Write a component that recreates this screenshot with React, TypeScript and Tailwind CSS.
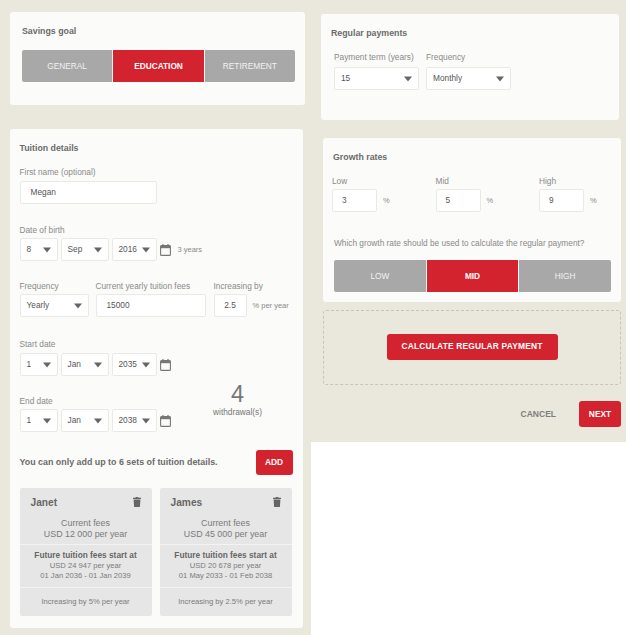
import React from 'react';

const Caret = () => (
  <svg width="8" height="6" viewBox="0 0 8 6" className="shrink-0 text-[#666]">
    <path d="M0 0.5h8L4 5.5z" fill="currentColor" />
  </svg>
);

const CalendarIcon = () => (
  <svg width="11" height="12" viewBox="0 0 11 12" className="shrink-0 text-[#777]">
    <path d="M3 0v2M8 0v2" stroke="currentColor" strokeWidth="1.2" />
    <rect x="0.6" y="1.6" width="9.8" height="9.8" rx="1" fill="none" stroke="currentColor" strokeWidth="1.1" />
    <rect x="0.6" y="1.6" width="9.8" height="2.6" fill="currentColor" />
  </svg>
);

const TrashIcon = () => (
  <svg width="8" height="10" viewBox="0 0 8 10" className="shrink-0 text-[#666]">
    <path d="M2.8 0h2.4l.3.7H8V2H0V.7h2.5zM.6 2.6h6.8L6.9 10H1.1z" fill="currentColor" />
  </svg>
);

const Label = ({ children, className = '' }: { children: React.ReactNode; className?: string }) => (
  <div className={`text-[8.3px] leading-[12px] text-[#8a8a8a] ${className}`}>{children}</div>
);

const Title = ({ children }: { children: React.ReactNode }) => (
  <h2 className="text-[8.8px] font-bold leading-[12px] text-[#6b6b6b]">{children}</h2>
);

const Select = ({ value, className = '' }: { value: string; className?: string }) => (
  <div className={`flex h-[23px] items-center justify-between rounded-[2px] border border-[#e9e9e6] bg-white pl-[6px] pr-[6px] text-[8.3px] text-[#555] ${className}`}>
    <span>{value}</span>
    <Caret />
  </div>
);

const TextInput = ({ value, className = '' }: { value: string; className?: string }) => (
  <div className={`flex h-[23px] items-center rounded-[2px] border border-[#e9e9e6] bg-white text-[8.3px] text-[#555] ${className}`}>
    {value}
  </div>
);

const Segmented = ({ items, active, className = '' }: { items: string[]; active: string; className?: string }) => (
  <div className={`flex gap-px overflow-hidden rounded-[2px] ${className}`}>
    {items.map(item => (
      <div
        key={item}
        className={`flex flex-1 items-center justify-center text-[8.3px] ${item === active ? 'bg-[#d2232f] font-bold text-white' : 'bg-[#a8a8a8] text-[#f2f2f2]'}`}
      >
        {item}
      </div>
    ))}
  </div>
);

const DateRow = ({ d, m, y, note }: { d: string; m: string; y: string; note?: string }) => (
  <div className="flex items-center">
    <Select value={d} className="w-[38px]" />
    <Select value={m} className="ml-[3px] w-[48px]" />
    <Select value={y} className="ml-[3px] w-[45px]" />
    <span className="ml-[3px]"><CalendarIcon /></span>
    {note && <span className="ml-[7px] text-[7.5px] text-[#8a8a8a]">{note}</span>}
  </div>
);

const RedButton = ({ children, className = '' }: { children: React.ReactNode; className?: string }) => (
  <div className={`flex items-center justify-center rounded-[3px] bg-[#d2232f] text-[8.4px] font-bold text-white ${className}`}>
    {children}
  </div>
);

const TuitionCard = ({ name, fee, future, range, rate }: { name: string; fee: string; future: string; range: string; rate: string }) => (
  <div className="w-[132px] rounded-[2px] bg-[#e6e6e6] text-center text-[#7a7a7a]">
    <div className="h-[56px] px-[11px] pt-[8px]">
      <div className="flex items-start justify-between">
        <span className="text-[10.2px] font-bold leading-[14px] text-[#666]">{name}</span>
        <span className="mt-[1px]"><TrashIcon /></span>
      </div>
      <div className="mt-[8px] text-[8.9px] leading-[10.5px]">Current fees</div>
      <div className="text-[8.9px] leading-[10.5px]">USD {fee} per year</div>
    </div>
    <div className="h-[43px] border-t border-[#f3f3f3] pt-[5px] text-[7.6px] leading-[10.5px]">
      <div className="text-[8.3px] font-bold text-[#666]">Future tuition fees start at</div>
      <div>USD {future} per year</div>
      <div>{range}</div>
    </div>
    <div className="flex h-[29px] items-center justify-center border-t border-[#f3f3f3] text-[7.6px]">
      Increasing by {rate} per year
    </div>
  </div>
);

export default function App() {
  return (
    <div className="flex h-[635px] w-[626px] overflow-hidden bg-white font-['Liberation_Sans',Arial,sans-serif]">
      <div className="h-full w-[311px] bg-[#eae8dd] pt-[12px]">
        <section className="ml-[10px] h-[93px] w-[295px] rounded-[3px] bg-[#fbfbf9] pl-[12px] pr-[10px] pt-[13px]">
          <Title>Savings goal</Title>
          <Segmented items={['GENERAL', 'EDUCATION', 'RETIREMENT']} active="EDUCATION" className="mt-[13px] h-[32px]" />
        </section>

        <section className="ml-[9.5px] mt-[24px] h-[499px] w-[293px] rounded-[3px] bg-[#fbfbf9] pl-[10px] pr-[10px] pt-[13px]">
          <Title>Tuition details</Title>

          <Label className="mt-[12px]">First name (optional)</Label>
          <TextInput value="Megan" className="mt-[3px] w-[137px] pl-[10px]" />

          <Label className="mt-[20px]">Date of birth</Label>
          <div className="mt-[2px]"><DateRow d="8" m="Sep" y="2016" note="3 years" /></div>

          <div className="mt-[19px] flex">
            <div className="w-[76px]">
              <Label>Frequency</Label>
              <Select value="Yearly" className="mt-[2px] w-[69px]" />
            </div>
            <div className="w-[118px]">
              <Label>Current yearly tuition fees</Label>
              <TextInput value="15000" className="mt-[2px] w-[110px] pl-[10px]" />
            </div>
            <div>
              <Label>Increasing by</Label>
              <div className="mt-[2px] flex items-center">
                <TextInput value="2.5" className="w-[33px] justify-center" />
                <span className="ml-[6px] text-[7.5px] text-[#8a8a8a]">% per year</span>
              </div>
            </div>
          </div>

          <Label className="mt-[21px]">Start date</Label>
          <div className="mt-[3px]"><DateRow d="1" m="Jan" y="2035" /></div>

          <div className="mt-[19px] flex">
            <div>
              <Label>End date</Label>
              <div className="mt-[2px]"><DateRow d="1" m="Jan" y="2038" /></div>
            </div>
            <div className="ml-[42px] mt-[-14px] w-[50px] text-center text-[#777]">
              <div className="text-[23.5px] leading-[26px]">4</div>
              <div className="whitespace-nowrap text-[8.3px] leading-[10px]">withdrawal(s)</div>
            </div>
          </div>

          <div className="mt-[18px] flex h-[25px] items-center justify-between">
            <span className="text-[8.9px] font-bold text-[#6b6b6b]">You can only add up to 6 sets of tuition details.</span>
            <RedButton className="h-[25px] w-[37px]">ADD</RedButton>
          </div>

          <div className="mt-[13px] flex gap-[8px]">
            <TuitionCard name="Janet" fee="12 000" future="24 947" range="01 Jan 2036 - 01 Jan 2039" rate="5%" />
            <TuitionCard name="James" fee="45 000" future="20 678" range="01 May 2033 - 01 Feb 2038" rate="2.5%" />
          </div>
        </section>
      </div>

      <div className="h-[442px] w-[315px] bg-[#eae8dd] pt-[14px]">
        <section className="ml-[10px] h-[106px] w-[298px] rounded-[3px] bg-[#fbfbf9] pl-[10px] pt-[13px]">
          <Title>Regular payments</Title>
          <div className="ml-[3px] mt-[12px] flex gap-[7px]">
            <div>
              <Label>Payment term (years)</Label>
              <Select value="15" className="mt-[4px] w-[85px]" />
            </div>
            <div>
              <Label>Frequency</Label>
              <Select value="Monthly" className="mt-[4px] w-[85px]" />
            </div>
          </div>
        </section>

        <section className="ml-[12px] mt-[18px] h-[164px] w-[298px] rounded-[3px] bg-[#fbfbf9] pl-[10px] pr-[10px] pt-[13px]">
          <Title>Growth rates</Title>
          <div className="ml-[-1px] mt-[12px] flex">
            {[['Low', '3', 'w-[103.5px]'], ['Mid', '5', 'w-[103.5px]'], ['High', '9', 'w-[70px]']].map(([label, value, width]) => (
              <div key={label} className={width}>
                <Label>{label}</Label>
                <div className="mt-[2px] flex items-center">
                  <TextInput value={value} className="w-[45px] pl-[9px]" />
                  <span className="ml-[6px] text-[7.5px] text-[#8a8a8a]">%</span>
                </div>
              </div>
            ))}
          </div>
          <div className="ml-[1px] mt-[25px] whitespace-nowrap text-[8.3px] leading-[12px] text-[#8a8a8a]">
            Which growth rate should be used to calculate the regular payment?
          </div>
          <Segmented items={['LOW', 'MID', 'HIGH']} active="MID" className="ml-[1px] mt-[11px] h-[32px] w-[277px]" />
        </section>

        <div className="ml-[12px] mt-[8px] flex h-[75px] w-[298px] items-center justify-center rounded-[3px] border border-dashed border-[#c8c6bb] pb-[2px]">
          <RedButton className="h-[26px] w-[171px] tracking-[0.2px]">CALCULATE REGULAR PAYMENT</RedButton>
        </div>

        <div className="mt-[16px] flex w-[310px] items-center justify-end">
          <span className="mr-[23px] text-[8.5px] font-bold text-[#7d7d7d]">CANCEL</span>
          <RedButton className="h-[26px] w-[42px]">NEXT</RedButton>
        </div>
      </div>
    </div>
  );
}
